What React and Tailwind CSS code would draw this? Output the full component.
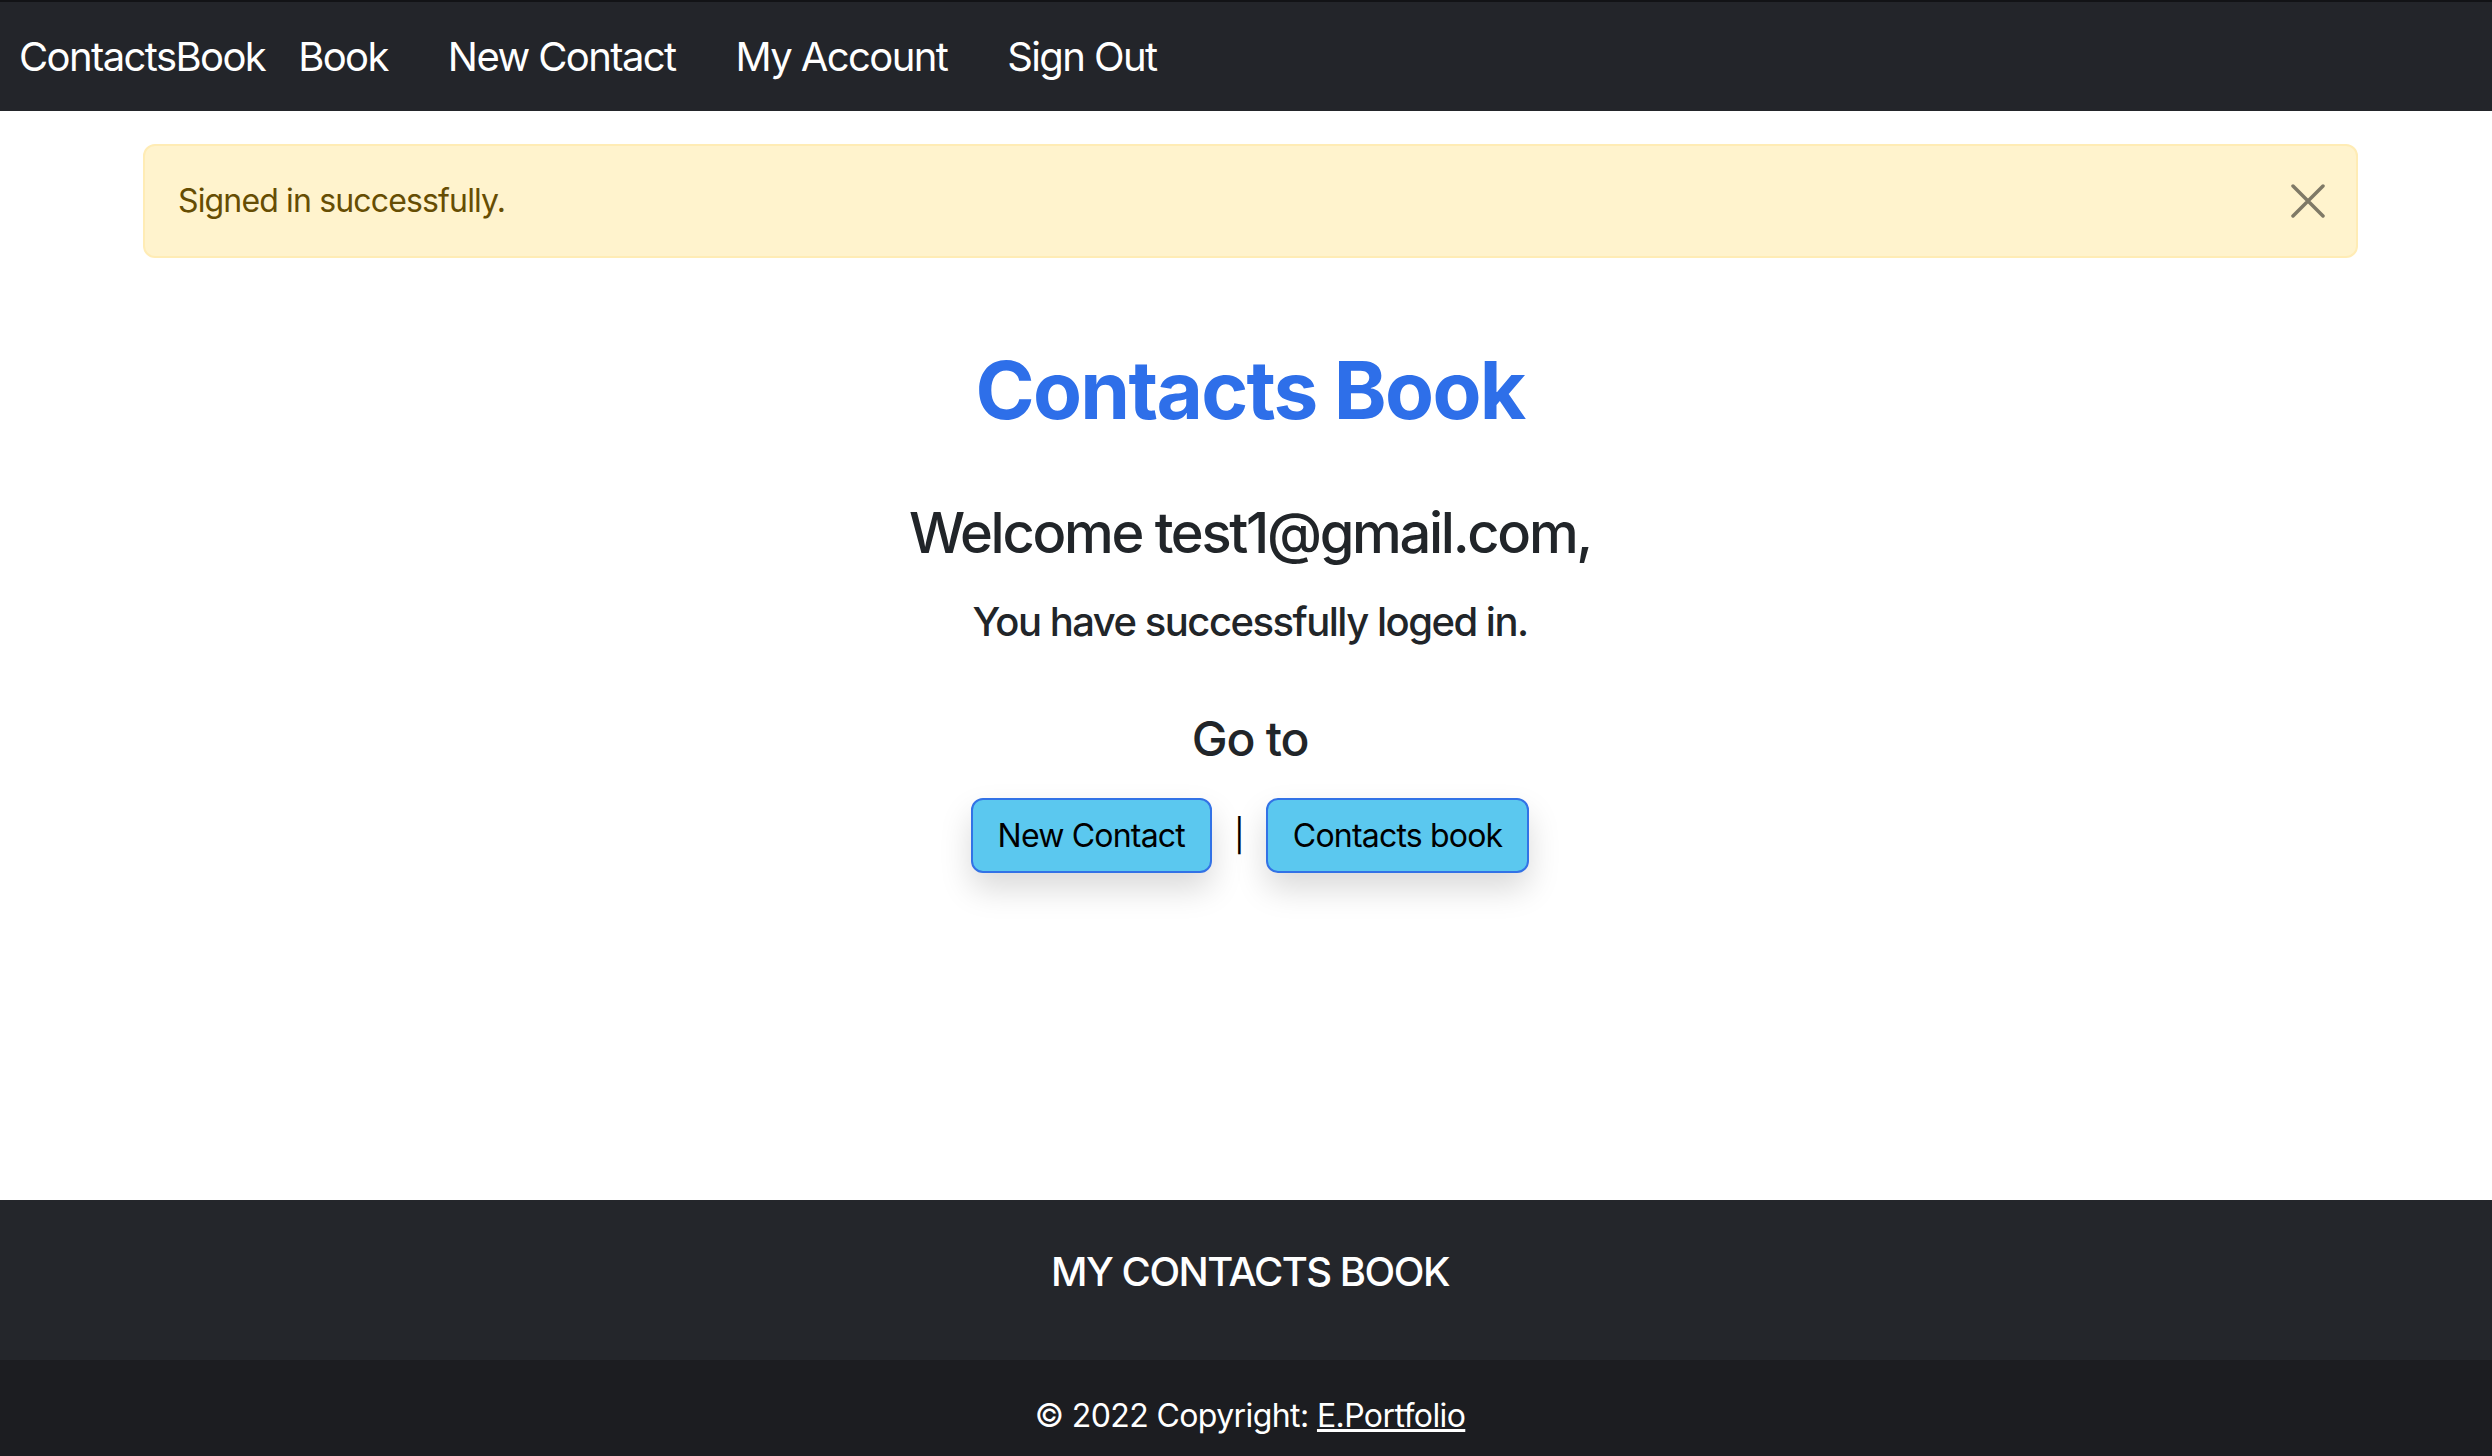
export default function App() {
  return (
    <div className="bg-white text-[#212529]" style={{ fontFamily: 'Inter, "Liberation Sans", sans-serif' }}>
      <nav className="h-[111px] border-t-2 border-[#121316] bg-[#23252a] flex items-center pl-[19px] text-white text-[40px] leading-[48px] tracking-[-1.6px]">
        <a className="mr-[3px]">ContactsBook</a>
        <a className="px-[30px]">Book</a>
        <a className="px-[30px]">New Contact</a>
        <a className="px-[30px]">My Account</a>
        <a className="px-[30px]">Sign Out</a>
      </nav>
      <div className="h-[1089px] overflow-hidden">
        <div className="mt-[33px] ml-[143px] w-[2215px] h-[114px] flex items-center justify-between pl-[33px] pr-[31px] rounded-[12px] border-2 border-[#ffecb5] bg-[#fff3cd] text-[#664d03] text-[32px] leading-[48px] tracking-[-0.85px]">
          <span>Signed in successfully.</span>
          <svg width="34" height="34" viewBox="0 0 34 34">
            <path d="M2 2 L32 32 M32 2 L2 32" stroke="#000" strokeOpacity="0.5" strokeWidth="3.5" strokeLinecap="round" />
          </svg>
        </div>
        <div className="flex flex-col items-center pl-[8px] text-center">
          <h1 className="mt-[84px] text-[80px] leading-[96px] font-bold text-[#2e6fe9] tracking-[-1.7px]">Contacts Book</h1>
          <h3 className="mt-[62px] text-[56px] leading-[67px] font-medium tracking-[-2.3px]">Welcome test1@gmail.com,</h3>
          <p className="mt-[32px] text-[40px] leading-[46px] font-medium tracking-[-1.5px]">You have successfully loged in.</p>
          <h4 className="mt-[65px] text-[48px] leading-[58px] font-medium tracking-[-1.2px]">Go to</h4>
          <div className="mt-[30px] flex items-center text-[32px] leading-[48px] text-black tracking-[-0.8px]">
            <button className="h-[75px] px-[25px] rounded-[12px] border-2 border-[#3272e6] bg-[#5bc8ef] shadow-[0_16px_32px_rgba(0,0,0,0.15)]">New Contact</button>
            <span className="mx-[22px]">|</span>
            <button className="h-[75px] px-[25px] rounded-[12px] border-2 border-[#3272e6] bg-[#5bc8ef] shadow-[0_16px_32px_rgba(0,0,0,0.15)]">Contacts book</button>
          </div>
        </div>
      </div>
      <footer className="bg-[#24262b] text-white">
        <div className="h-[160px] flex flex-col items-center pt-[48px] pl-[8px]">
          <h5 className="text-[40px] leading-[48px] font-medium uppercase tracking-[-1.5px]">My Contacts Book</h5>
        </div>
        <div className="bg-[#1c1d21] py-[32px] pl-[8px] text-center text-[32px] leading-[48px] tracking-[-0.6px]">
          © 2022 Copyright: <a className="underline">E.Portfolio</a>
        </div>
      </footer>
    </div>
  );
}
